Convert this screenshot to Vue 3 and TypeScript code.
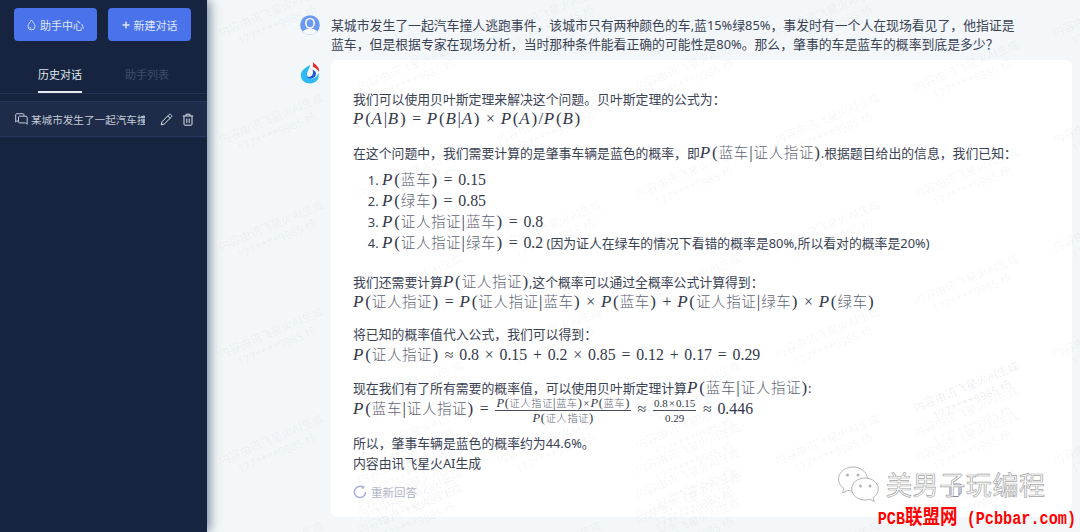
<script setup lang="ts">
type Part = { k: 't' | 'm'; s: string } | { k: 'f'; n: string; d: string }
interface Tok { s: string; c: string }

const t = (s: string): Part => ({ k: 't', s })
const m = (s: string): Part => ({ k: 'm', s })

function toks(s: string): Tok[] {
  const out: Tok[] = []
  for (const ch of Array.from(s)) {
    if (/[PAB]/.test(ch)) out.push({ s: ch, c: 'mi' })
    else if (/[=+×≈]/.test(ch)) out.push({ s: ch, c: 'op' })
    else if (/[\u4e00-\u9fff]/.test(ch)) out.push({ s: ch, c: 'han' })
    else if (/[()|/]/.test(ch)) out.push({ s: ch, c: 'pu' })
    else out.push({ s: ch, c: 'mn' })
  }
  return out
}

const first: Part[][] = [
  [t('我们可以使用贝叶斯定理来解决这个问题。贝叶斯定理的公式为：')],
  [m('P(A|B)=P(B|A)×P(A)/P(B)')],
]
const second: Part[] = [
  t('在这个问题中，我们需要计算的是肇事车辆是蓝色的概率，即'),
  m('P(蓝车|证人指证)'),
  t('.根据题目给出的信息，我们已知：'),
]
const listItems: Part[][] = [
  [m('P(蓝车)=0.15')],
  [m('P(绿车)=0.85')],
  [m('P(证人指证|蓝车)=0.8')],
  [m('P(证人指证|绿车)=0.2'), t(' (因为证人在绿车的情况下看错的概率是80%,所以看对的概率是20%)')],
]
const groups: { cls: string; lines: Part[][] }[] = [
  {
    cls: 'g-a',
    lines: [
      [t('我们还需要计算'), m('P(证人指证)'), t(',这个概率可以通过全概率公式计算得到：')],
      [m('P(证人指证)=P(证人指证|蓝车)×P(蓝车)+P(证人指证|绿车)×P(绿车)')],
    ],
  },
  {
    cls: 'g-b',
    lines: [
      [t('将已知的概率值代入公式，我们可以得到：')],
      [m('P(证人指证)≈0.8×0.15+0.2×0.85=0.12+0.17=0.29')],
    ],
  },
  {
    cls: 'g-b',
    lines: [
      [t('现在我们有了所有需要的概率值，可以使用贝叶斯定理计算'), m('P(蓝车|证人指证)'), t(':')],
      [
        m('P(蓝车|证人指证)='),
        { k: 'f', n: 'P(证人指证|蓝车)×P(蓝车)', d: 'P(证人指证)' },
        m('≈'),
        { k: 'f', n: '0.8×0.15', d: '0.29' },
        m('≈0.446'),
      ],
    ],
  },
  {
    cls: 'g-c',
    lines: [[t('所以，肇事车辆是蓝色的概率约为44.6%。')], [t('内容由讯飞星火AI生成')]],
  },
]

const allParagraphs = [
  { cls: 'g-first', lines: first },
  { cls: 'g-b', lines: [second] },
]

const marks: { x: number; y: number }[] = []
for (let col = 0; col < 7; col++) {
  const odd = col % 2 === 1
  for (let row = -1; row < 6; row++) {
    marks.push({ x: 7 + col * 139, y: (odd ? 57 : 110) + row * 107 })
  }
}
for (const [col, top, count] of [[1, 425, 4], [3, 415, 5], [5, 378, 3]]) {
  for (let i = 0; i < count; i++) {
    marks.push({ x: 7 + col * 139, y: top + i * 25 })
  }
}
</script>

<template>
  <div class="app">
    <aside class="side">
      <div class="btns">
        <button class="btn">
          <svg width="9" height="12" viewBox="0 0 9 12" fill="none" stroke="currentColor" stroke-width=".9"><path d="M4.500 1C3.600 2.900 1 4.700 1 7.400a3.500 3.500 0 0 0 7 0C8 4.700 5.400 2.900 4.500 1Z"/><path d="M3 7.800a1.700 1.700 0 0 0 1.400 1.700"/></svg>
          助手中心
        </button>
        <button class="btn">
          <svg width="8" height="8" viewBox="0 0 8 8" stroke="currentColor" stroke-width="1.500"><path d="M4 .5v7M.5 4h7"/></svg>
          新建对话
        </button>
      </div>
      <div class="tabs">
        <span class="tab on">历史对话</span>
        <span class="tab">助手列表</span>
      </div>
      <div class="item">
        <svg class="chat" width="13" height="12" viewBox="0 0 13 12" fill="none" stroke="currentColor" stroke-width="1"><path d="M3 8H1.800L.7 9V1.800C.7 1.200 1.200.7 1.800.7h6C8.400.7 9 1.200 9 1.800V3"/><path d="M3.500 4.200c0-.6.500-1 1-1h6.500c.6 0 1.200.4 1.200 1v7l-1.600-1.300H4.500c-.5 0-1-.4-1-1Z"/></svg>
        <span class="item-text">某城市发生了一起汽车撞人逃跑事件</span>
        <svg class="act" width="13" height="13" viewBox="0 0 13 13" fill="none" stroke="currentColor" stroke-width="1"><path d="M1.200 11.800 2 8.800 9 1.600c.5-.5 1.300-.5 1.800 0l.6.6c.5.5.5 1.300 0 1.800L4.300 11Z"/><path d="M7.800 2.900 10.200 5.300"/></svg>
        <svg class="act" width="12" height="13" viewBox="0 0 12 13" fill="none" stroke="currentColor" stroke-width="1"><path d="M.8 3h10.400M4 3V1.200h4V3M2 3v8.200c0 .6.400 1 1 1h6c.6 0 1-.4 1-1V3M4.800 5.500v4.500M7.200 5.500v4.500"/></svg>
      </div>
    </aside>

    <main class="main">
      <section class="row user">
        <svg class="avatar up" width="20" height="20" viewBox="0 0 20 20"><defs><clipPath id="av"><circle cx="10" cy="10" r="9.800"/></clipPath></defs><circle cx="10" cy="10" r="9.800" fill="#6b98f5"/><g clip-path="url(#av)" fill="#f6f8fd"><ellipse cx="10" cy="8.300" rx="5" ry="5.600"/><ellipse cx="10" cy="19.500" rx="8.500" ry="6"/></g><ellipse cx="10" cy="8.300" rx="3.300" ry="4" fill="#6b98f5"/></svg>
        <p class="ask">某城市发生了一起汽车撞人逃跑事件，该城市只有两种颜色的车,蓝15%绿85%，事发时有一个人在现场看见了，他指证是<br />蓝车，但是根据专家在现场分析，当时那种条件能看正确的可能性是80%。那么，肇事的车是蓝车的概率到底是多少？</p>
      </section>

      <section class="row bot">
        <svg class="avatar logo" width="20" height="23" viewBox="0 0 20 23"><path d="M10 4C5 7 .8 9.500.8 14.500A9 8 0 0 0 18.800 14.500C18.800 13.500 18.600 12.500 18.300 12C17.500 15 15 17.500 12 17.500C9 17.500 7 15.800 7 13.500C7 10 9.600 8 10 4Z" fill="#2fb9f4"/><path d="M12.500 8.500C15.500 10 16.500 12 15.800 14C15 16.500 12.500 18 10 17.500C8.500 17.200 7.500 16.500 7 15.500C8 16 9.500 16 10.500 15.500C13 14.500 13.500 11.500 12.500 8.500Z" fill="#2156d8"/><path d="M12.500 0c.2 2.200 5 4 6.300 7.800.4 1.100.3 2.100.1 3.100-.9-2.300-3.200-4-6-5.200C13.200 3.800 13.300 2 12.500 0Z" fill="#e8262b"/></svg>
        <div class="card">
          <div v-for="(g, gi) in allParagraphs" :key="gi" :class="g.cls">
            <div v-for="(line, li) in g.lines" :key="li" class="line">
              <template v-for="(part, pi) in line" :key="pi">
                <span v-if="part.k === 't'">{{ part.s }}</span>
                <span v-else-if="part.k === 'm'" class="math"><span v-for="(tk, ti) in toks(part.s)" :key="ti" :class="tk.c">{{ tk.s }}</span></span>
              </template>
            </div>
          </div>

          <ol class="list">
            <li v-for="(line, li) in listItems" :key="li">
              <template v-for="(part, pi) in line" :key="pi">
                <span v-if="part.k === 't'">{{ part.s }}</span>
                <span v-else-if="part.k === 'm'" class="math"><span v-for="(tk, ti) in toks(part.s)" :key="ti" :class="tk.c">{{ tk.s }}</span></span>
              </template>
            </li>
          </ol>

          <div v-for="(g, gi) in groups" :key="gi" :class="g.cls">
            <div v-for="(line, li) in g.lines" :key="li" class="line">
              <template v-for="(part, pi) in line" :key="pi">
                <span v-if="part.k === 't'">{{ part.s }}</span>
                <span v-else-if="part.k === 'm'" class="math"><span v-for="(tk, ti) in toks(part.s)" :key="ti" :class="tk.c">{{ tk.s }}</span></span>
                <span v-else class="frac">
                  <span class="num"><span v-for="(tk, ti) in toks(part.n)" :key="ti" :class="tk.c">{{ tk.s }}</span></span>
                  <span class="den"><span v-for="(tk, ti) in toks(part.d)" :key="ti" :class="tk.c">{{ tk.s }}</span></span>
                </span>
              </template>
            </div>
          </div>

          <div class="redo">
            <svg width="14" height="14" viewBox="0 0 14 14" fill="none" stroke="#a9aed6" stroke-width="1.500"><path d="M12.600 7A5.600 5.600 0 1 1 10.500 2.600"/><path d="M10.800 .6v2.500H8.300" stroke-width="1"/></svg>
            重新回答
          </div>
        </div>
      </section>

      <div class="marks" aria-hidden="true">
        <div v-for="(w, i) in marks" :key="i" class="mark" :style="{ left: w.x + 'px', top: w.y + 'px' }">
          <span>内容由讯飞星火AI生成</span>
          <span>177****9985 杨</span>
        </div>
      </div>

      <div class="tools" aria-hidden="true">
        <svg width="13" height="14" viewBox="0 0 13 14" fill="none" stroke="#7d86b0" stroke-width="1"><rect x="3" y="1" width="9" height="10" rx="1"/><rect x="1" y="3.500" width="9" height="10" rx="1" fill="#fff"/></svg>
        <svg width="12" height="10" viewBox="0 0 12 10" fill="none" stroke="#a7aecb" stroke-width="1"><path d="M1 1v5c0 1.500 1 2.500 2.500 2.500h5c1.500 0 2.500-1 2.500-2.500V1"/></svg>
      </div>

      <div class="wechat">
        <svg width="44" height="36" viewBox="0 0 44 36" fill="#fff" stroke="#b4b4b4" stroke-width="1"><path d="M16 1C8 1 1.500 6.300 1.500 13c0 3.800 2.100 7.200 5.400 9.400L5.500 27l5.200-2.700c1.700.5 3.400.8 5.300.8 7.900 0 14.400-5.400 14.400-12S24 1 16 1Z"/><path d="M28 12c-7.400 0-13.300 4.900-13.300 11S20.600 34 28 34c1.700 0 3.300-.3 4.800-.8l4.500 2.300-1.200-4c3.200-2 5.200-5.200 5.200-8.500C41.300 16.900 35.400 12 28 12Z"/><g fill="#b4b4b4" stroke="none"><circle cx="10.500" cy="9" r="1.500"/><circle cx="21" cy="9" r="1.500"/><circle cx="23.500" cy="20" r="1.500"/><circle cx="33" cy="20" r="1.500"/></g></svg>
        <span>美男子玩编程</span>
      </div>
      <div class="pcb">PCB<span class="pcb-cn">联盟网</span> (Pcbbar.com)</div>
    </main>
  </div>
</template>

<style>
html, body { margin: 0; padding: 0; overflow: hidden; }
</style>

<style scoped>
.app {
  display: flex;
  width: 1080px;
  height: 532px;
  overflow: hidden;
  font-family: "Noto Sans", "Noto Sans CJK SC", sans-serif;
  font-size: 12.850px;
  color: #3a4254;
}
.side {
  width: 207px;
  flex: none;
  background: #17243f;
  box-shadow: 2px 0 11px rgba(30, 60, 90, .65);
  position: relative;
  z-index: 2;
}
.btns { display: flex; gap: 11px; padding: 8px 16px 0 14px; }
.btn {
  flex: 1;
  height: 33px;
  border: 0;
  border-radius: 4px;
  background: #4a72ea;
  color: #dfe6fb;
  font: inherit;
  font-size: 11px;
  display: flex;
  align-items: center;
  justify-content: center;
  gap: 4px;
  padding: 0;
}
.tabs {
  display: flex;
  gap: 43px;
  height: 53px;
  padding: 0 0 0 38px;
  border-bottom: 1px solid #243350;
  box-sizing: border-box;
  align-items: flex-end;
}
.tab { color: #3f4c66; line-height: 18px; height: 27px; box-sizing: border-box; font-size: 11px; }
.tab.on { color: #dfe4ee; border-bottom: 2px solid #e8ebf2; }
.item {
  margin-top: 7px;
  height: 36px;
  background: #1e2c4a;
  border-top: 1px solid #27365a;
  border-bottom: 1px solid #27365a;
  display: flex;
  align-items: center;
  padding-left: 15px;
  color: #c4cad6;
  box-sizing: border-box;
}
.chat { flex: none; margin-right: 3px; }
.item-text { width: 114px; flex: none; overflow: hidden; white-space: nowrap; font-size: 10.600px; margin-right: 15px; }
.act { flex: none; margin-right: 9px; color: #dde1e8; }
.main {
  flex: 1;
  position: relative;
  background: #f3f7f9;
  padding: 16px 8px 0 93px;
  min-width: 0;
}
.row { display: flex; gap: 11px; position: relative; }
.avatar { flex: none; width: 20px; }
.up { margin-top: -1px; }
.ask { margin: 0; line-height: 19px; color: #3a4254; white-space: nowrap; }
.bot { margin-top: 6px; }
.logo { margin-top: 1px; }
.card {
  width: 741px;
  height: 457px;
  box-sizing: border-box;
  flex: none;
  background: #fff;
  border-radius: 6px;
  padding: 29px 22px 0;
}
.line { line-height: 20px; height: 20px; white-space: nowrap; }
.g-b { margin-top: 13px; }
.g-a { margin-top: 19px; }
.g-c { margin-top: 16px; }
.list { margin: 6px 0 0; padding: 0 0 0 29px; }
.list li { height: 21px; line-height: 21px; white-space: nowrap; }
.math { font-family: "Liberation Serif", "Noto Sans CJK SC", serif; font-size: 15.800px; color: #33394a; }
.mi { font-style: italic; font-size: 17px; margin-right: 1.100px; }
.pu { font-size: 17px; margin: 0 .7px; font-weight: 300; }
.op { margin: 0 5.800px; }
.han { font-family: "Noto Sans CJK SC", sans-serif; font-weight: 300; font-size: 14.500px; margin: 0 .3px; color: #5f6676; }
.frac {
  display: inline-flex;
  flex-direction: column;
  align-items: center;
  vertical-align: middle;
  font-family: "Liberation Serif", "Noto Sans CJK SC", serif;
  font-size: 11px;
  line-height: 12px;
  color: #33394a;
  margin: 0 1px;
}
.frac .op { margin: 0 1px; }
.frac .mi { font-size: 12.500px; margin-right: .3px; }
.frac .pu { font-size: 12.500px; margin: 0 .3px; }
.frac .han { font-size: 10.500px; margin: 0 .2px; }
.num { border-bottom: 1px solid #4a4f63; padding: 0 1px 1px; }
.den { padding-top: 1px; }
.redo {
  display: flex;
  align-items: center;
  gap: 4px;
  margin-top: 9px;
  height: 20px;
  color: #b3b6c8;
  font-size: 11.500px;
}
.marks { position: absolute; inset: 0; overflow: hidden; pointer-events: none; }
.mark {
  position: absolute;
  display: flex;
  flex-direction: column;
  align-items: center;
  width: 120px;
  transform: rotate(-23deg);
  font-size: 11.300px;
  line-height: 15px;
  color: rgba(40, 50, 70, .055);
  white-space: nowrap;
}
.tools { position: absolute; left: 742px; top: 483px; display: flex; align-items: flex-start; gap: 33px; }
.wechat {
  position: absolute;
  left: 630px;
  top: 465px;
  display: flex;
  align-items: center;
  gap: 5px;
  font-size: 26px;
  letter-spacing: .6px;
  color: #fff;
  -webkit-text-stroke: .7px #a6a6a6;
  white-space: nowrap;
}
.pcb {
  position: absolute;
  right: 4px;
  bottom: 3px;
  font-family: "Liberation Mono", "Noto Sans CJK SC", monospace;
  font-size: 15.200px;
  font-weight: 700;
  line-height: 20px;
  color: #ff0000;
  white-space: nowrap;
  text-shadow: 0 0 2px #fff;
  transform: scaleY(1.150);
}
.pcb-cn { font-family: "Noto Sans CJK SC", sans-serif; font-size: 17.500px; }
</style>
